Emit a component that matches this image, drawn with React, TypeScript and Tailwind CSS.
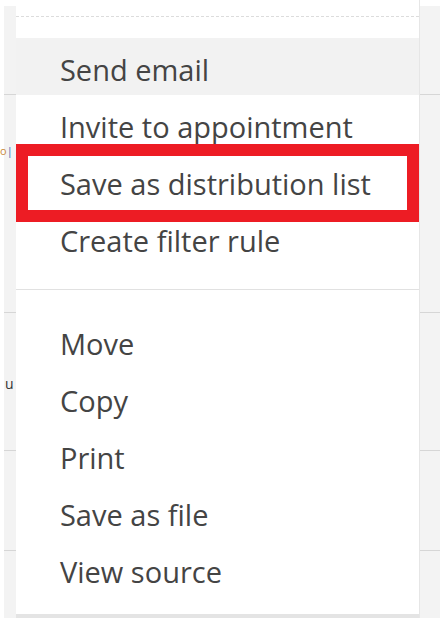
import React from 'react';

const topItems = ['Send email', 'Invite to appointment', 'Save as distribution list', 'Create filter rule'];
const bottomItems = ['Move', 'Copy', 'Print', 'Save as file', 'View source'];

const MenuItem = ({ label, hover }: { label: string; hover?: boolean }) => (
  <div
    className={`h-[57px] flex items-center pt-[5px] pl-[44px] text-[29px] text-[#444] leading-none ${
      hover ? 'bg-[#f2f2f2]' : ''
    }`}
  >
    {label}
  </div>
);

// strip of the list that shows beside the menu
const Gutter = ({ side }: { side: 'left' | 'right' }) => (
  <div className={`flex flex-col pt-[6px] ${side === 'left' ? 'w-[16px]' : 'w-[20px]'}`}>
    <div className={`flex-1 flex flex-col bg-[#f3f3f3] ${side === 'left' ? 'ml-[4px]' : ''}`}>
      <div className="h-[89px] border-b border-[#d6d6d6]" />
      <div className="h-[218px] border-b border-[#d6d6d6] pt-[50px]">
        {side === 'left' && (
          <span className="block text-[11px] leading-none text-[#c98a3c] -ml-[4px]">
            o<span className="text-[#3b6fb5]">|</span>
          </span>
        )}
      </div>
      <div className="h-[138px] border-b border-[#d6d6d6] pt-[64px]">
        {side === 'left' && <span className="block pl-[1px] text-[14px] leading-none text-[#333]">u</span>}
      </div>
      <div className="h-[100px] border-b border-[#d6d6d6]" />
      <div className="flex-1" />
    </div>
  </div>
);

export default function App() {
  return (
    <div
      className="w-[440px] h-[618px] bg-white flex overflow-hidden"
      style={{ fontFamily: '"Open Sans", "Noto Sans", sans-serif' }}
    >
      <Gutter side="left" />
      <div className="w-[404px] flex flex-col">
        <div className="h-[16px]" />
        <div className="border-t border-dashed border-[#dcdcdc]" />
        <div className="h-[21px]" />
        <MenuItem label={topItems[0]} hover />
        <MenuItem label={topItems[1]} />
        <div className="relative">
          <MenuItem label={topItems[2]} />
          {/* highlight frame */}
          <div className="absolute inset-x-0 -top-2 -bottom-[13px] border-[12px] border-[#ed1c24]" />
        </div>
        <MenuItem label={topItems[3]} />
        <div className="h-[46px] flex items-center">
          <div className="w-full border-t border-[#e1e1e1]" />
        </div>
        {bottomItems.map(label => (
          <MenuItem key={label} label={label} />
        ))}
        <div className="flex-1" />
        <div className="h-[4px] bg-[#e4e4e4]" />
      </div>
      <div className="border-l border-[#e6e6e6]" />
      <Gutter side="right" />
    </div>
  );
}
